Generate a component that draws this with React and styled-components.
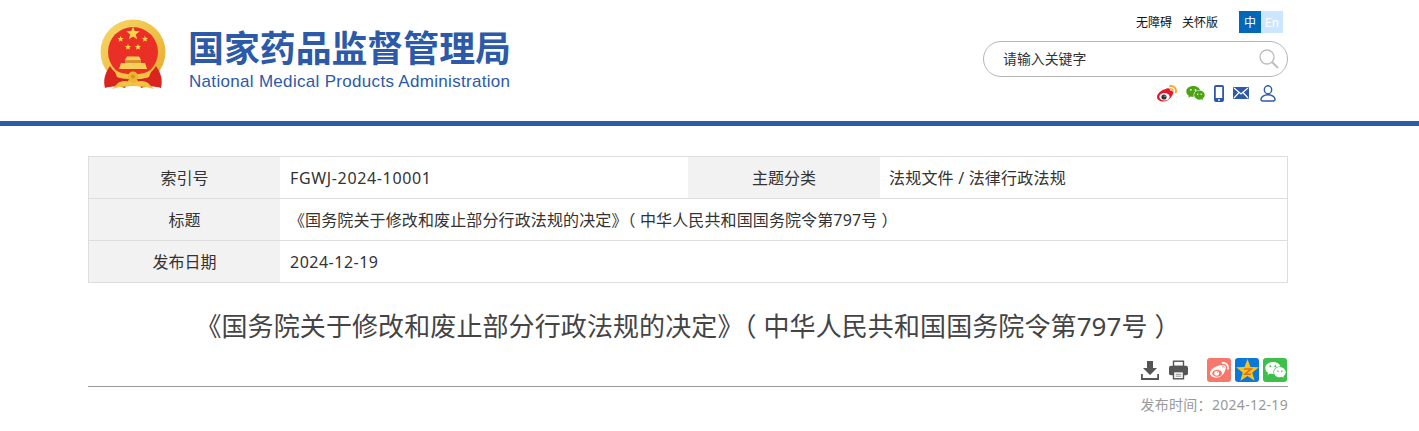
import React from "react";
import styled, { createGlobalStyle } from "styled-components";

const Global = createGlobalStyle`
  html, body { margin: 0; padding: 0; background: #fff; }
  body { font-family: "Noto Sans", "Noto Sans CJK SC", sans-serif; color: #333; overflow: hidden; }
`;
const Page = styled.div`width: 1419px; height: 431px; overflow: hidden;`;
const Header = styled.header`height: 121px; border-bottom: 5px solid #2c5aa8;`;
const Wrap = styled.div`width: 1200px; margin-left: 88px;`;
const HeaderInner = styled(Wrap)`display: flex; justify-content: space-between; height: 121px;`;
const Brand = styled.div`display: flex; align-items: flex-start; padding: 19px 0 0 11px;`;
const BrandText = styled.div`margin-left: 22px; padding-top: 6px; display: flex; flex-direction: column;`;
const CnName = styled.div`
  font-family: "Noto Sans CJK SC", sans-serif; font-weight: 700; font-size: 35.9px; line-height: 42px;
  color: #2c5aa8; white-space: nowrap; margin-left: -1px;
`;
const EnName = styled.div`
  font-family: "Liberation Sans", sans-serif; font-size: 17px; line-height: 20px; margin-top: 5px;
  letter-spacing: .31px; color: #2c5aa8; white-space: nowrap;
`;
const Tools = styled.div`width: 305px; display: flex; flex-direction: column; align-items: flex-end;`;
const TopLinks = styled.div`display: flex; align-items: center; padding: 11px 5px 0 0; height: 22px;`;
const TopLink = styled.span`
  font-family: "Noto Sans CJK SC", sans-serif; font-size: 12px; line-height: 22px; color: #111; margin-right: 10px;
  &:nth-child(2) { margin-right: 21px; }
`;
const Lang = styled.span`
  width: 22px; height: 22px; line-height: 22px; text-align: center; font-size: 12px;
  font-family: "Noto Sans CJK SC", sans-serif; color: #fff;
  background: ${p => (p.$on ? "#0068b7" : "#cce6ff")};
`;
const Search = styled.div`
  box-sizing: border-box; width: 305px; height: 36px; margin-top: 8px; border: 1px solid #b5b5b5; border-radius: 18px;
  display: flex; align-items: center; justify-content: space-between; padding: 0 8px 0 19px;
  font-family: "Noto Sans CJK SC", sans-serif; font-size: 14px; line-height: 32px; color: #333;
`;
const SearchHint = styled.span`position: relative; top: -1px; font-size: 13.9px;`;
const IconRow = styled.div`display: flex; align-items: center; height: 20px; margin-top: 6px; padding-right: 12px; gap: 9px;`;
const UserSlot = styled.span`display: flex; margin-left: 2px;`;
const Main = styled(Wrap)`padding-top: 30px;`;
const Table = styled.div`
  display: grid; grid-template-columns: 191px 408px 192px 1fr; border: 1px solid #ddd; border-bottom: 0;
  font-size: 16px; color: #333;
`;
const Label = styled.div`
  background: #f2f2f2; height: 41px; line-height: 41px; text-align: center; border-bottom: 1px solid #ddd;
  font-family: "Noto Sans CJK SC", sans-serif; font-size: 16px;
`;
const Value = styled.div`
  grid-column: ${p => (p.$wide ? "2 / -1" : "auto")};
  height: 41px; line-height: 43px; padding-left: ${p => p.$pad ?? 9}px; border-bottom: 1px solid #ddd; white-space: nowrap;
  letter-spacing: ${p => p.$track ?? 0}px;
  font-family: "Noto Sans", "Noto Sans CJK SC", sans-serif; font-size: 16px;
`;
const Title = styled.h1`
  margin: 24px 0 0; font-weight: 400; font-size: 26px; line-height: 38px; text-align: center; color: #444;
  letter-spacing: .1px; font-family: "Noto Sans", "Noto Sans CJK SC", sans-serif; white-space: nowrap;
`;
const ActionRow = styled.div`
  display: flex; justify-content: flex-end; align-items: center; height: 32px; margin-top: 6px; padding-top: 3px;
  border-bottom: 1px solid #999;
`;
const ActionGroup = styled.div`display: flex; align-items: center; gap: ${p => p.$gap}px; margin-right: ${p => p.$mr}px;`;
const Share = styled.span`
  width: 24px; height: 24px; border-radius: 3px; background: ${p => p.$bg}; display: flex; align-items: center; justify-content: center;
`;
const Meta = styled.div`
  margin-top: 8px; text-align: right; font-size: 14px; line-height: 20px; color: #999; letter-spacing: .3px;
  font-family: "Noto Sans", "Noto Sans CJK SC", sans-serif;
`;

const Star = ({ x, y, r, fill = "#f9d64a" }) => {
  const pts = [];
  for (let i = 0; i < 10; i++) {
    const a = (Math.PI / 5) * i - Math.PI / 2;
    const d = i % 2 ? r * 0.42 : r;
    pts.push(`${(x + d * Math.cos(a)).toFixed(2)},${(y + d * Math.sin(a)).toFixed(2)}`);
  }
  return <polygon points={pts.join(" ")} fill={fill} />;
};

const Emblem = () => (
  <svg width="68" height="70" viewBox="0 0 68 70">
    <defs>
      <linearGradient id="ring" x1="0" y1="0" x2="1" y2="1">
        <stop offset="0" stopColor="#f7d86b" />
        <stop offset="1" stopColor="#e7ab28" />
      </linearGradient>
    </defs>
    <circle cx="34" cy="33" r="32.5" fill="url(#ring)" />
    <circle cx="34" cy="33" r="25" fill="#ea3026" />
    <Star x={34} y={14.5} r={7} />
    <Star x={21.6} y={20} r={3.3} />
    <Star x={46} y={20} r={3.3} />
    <Star x={29} y={28} r={3.3} />
    <Star x={39} y={28} r={3.3} />
    <path d="M28 37.500 H40 L42 41 H26Z" fill="#f6cf58" />
    <rect x="26" y="41" width="16" height="3" fill="#d9912b" />
    <path d="M22 44 H46 L48 50 H20Z" fill="#f6cf58" />
    <path d="M11 47 C6 54 4 61 6 69 C12 67 20 67 26 69 L30 60 C22 58 15 54 11 47Z" fill="#d9241f" />
    <path d="M57 47 C62 54 64 61 62 69 C56 67 48 67 42 69 L38 60 C46 58 53 54 57 47Z" fill="#d9241f" />
    <path d="M15 50 C22 57 46 57 53 50 L50 58 C44 61 24 61 18 58Z" fill="#f2c242" />
    <circle cx="34" cy="57.500" r="5" fill="#ecb630" />
    <circle cx="34" cy="57.500" r="2" fill="#d9912b" />
    <path d="M13 70 L19 64 C24 61 30 62 34 64 C38 62 44 61 49 64 L55 70 L47 68 L34 67 L21 68Z" fill="#f2c242" />
  </svg>
);

const WeiboIcon = ({ face = "#e6162d", eye = "#333", wave = "#f5a623", width = 20 }) => (
  <svg width={width} height={width * 0.85} viewBox="0 0 20 17">
    <path d="M8 4.300C10.800 2.600 13.400 3 13 5.700c2.200-.5 3.900.6 3 2.900-1 3.700-4.900 7.900-9.300 7.900C3.100 16.500 0 14.700 0 11.900 0 9.400 3.400 5.400 8 4.300z" fill={face} />
    <ellipse cx="7.500" cy="11.800" rx="5.200" ry="3.700" fill={face === "#fff" ? eye : "#fff"} />
    <circle cx="7" cy="12" r="2.600" fill={face === "#fff" ? "#fff" : eye} />
    <circle cx="7.900" cy="11.100" r=".6" fill={face === "#fff" ? eye : "#fff"} />
    <path d="M13.200 1c3.400-.6 6.500 2.400 5.700 6.300" fill="none" stroke={wave} strokeWidth="1.800" strokeLinecap="round" />
    <path d="M13.500 3.900c1.700-.3 2.900 1 2.600 2.700" fill="none" stroke={wave} strokeWidth="1.300" strokeLinecap="round" />
  </svg>
);
const WechatIcon = ({ c = "#4ba414", hole = "#fff", width = 19 }) => (
  <svg width={width} height={width * 0.85} viewBox="0 0 20 17">
    <path d="M7.500 1C3.500 1 .3 3.500.3 6.800c0 1.900 1.100 3.400 2.700 4.500L2.300 13.300l2.500-1.300c.9.200 1.700.4 2.700.4.300 0 .6 0 .8 0-.2-.6-.3-1.100-.3-1.800 0-3 2.700-5.300 6.200-5.300h.6C14.100 2.900 11.100 1 7.500 1z" fill={c} />
    <path d="M19.700 10.600c0-2.700-2.700-4.900-5.600-4.900-3.100 0-5.500 2.200-5.500 4.900s2.400 4.900 5.500 4.900c.6 0 1.300-.2 2-.4l1.800 1-.5-1.700c1.400-1 2.300-2.300 2.300-3.800z" fill={c} />
    <circle cx="5.100" cy="5.100" r=".95" fill={hole} /><circle cx="9.900" cy="5.100" r=".95" fill={hole} />
    <circle cx="12.300" cy="9.700" r=".75" fill={hole} /><circle cx="16" cy="9.700" r=".75" fill={hole} />
  </svg>
);
const PhoneIcon = () => (
  <svg width="10" height="17" viewBox="0 0 10 17">
    <rect width="10" height="17" rx="2" fill="#2c5aa8" />
    <rect x="1.800" y="2" width="6.400" height="11" fill="#fff" />
    <circle cx="5" cy="15" r=".9" fill="#fff" />
  </svg>
);
const MailIcon = () => (
  <svg width="16" height="12" viewBox="0 0 16 12">
    <rect width="16" height="12" rx="1" fill="#2c5aa8" />
    <path d="M1 1 L8 7 L15 1 M1 11 L6 5.500 M15 11 L10 5.500" fill="none" stroke="#fff" strokeWidth="1.200" />
  </svg>
);
const UserIcon = () => (
  <svg width="16" height="17" viewBox="0 0 17 18" fill="none" stroke="#2c5aa8" strokeWidth="1.500">
    <ellipse cx="8.500" cy="5" rx="3.900" ry="4.300" />
    <path d="M1 15.500c0-3 3.500-5.200 7.500-5.200s7.500 2.200 7.500 5.200c0 1-.7 1.500-1.500 1.500h-12C1.700 17 1 16.500 1 15.500z" />
  </svg>
);
const SearchIcon = () => (
  <svg width="20" height="20" viewBox="0 0 20 20" fill="none" stroke="#bdbdbd">
    <circle cx="8" cy="8" r="7" strokeWidth="1.300" />
    <path d="M13 13 L19 19" strokeWidth="1.800" />
  </svg>
);
const DownloadIcon = () => (
  <svg width="18" height="19" viewBox="0 0 18 19" fill="#555">
    <path d="M6 0h6v7h4L9 14 2 7h4z" />
    <path d="M0 13h1.800v4h14.400v-4H18v6H0z" />
  </svg>
);
const PrintIcon = () => (
  <svg width="19" height="20" viewBox="0 0 20 20">
    <path d="M4 0h12v6H4z" fill="#555" />
    <rect x="5.500" y="1.500" width="9" height="4" fill="#fff" />
    <rect x="0" y="5.500" width="20" height="10" rx="2" fill="#555" />
    <path d="M4 11h12v9H4z" fill="#555" />
    <rect x="5.500" y="12.500" width="9" height="6" fill="#fff" />
    <path d="M7 14.500h6M7 16.500h6" stroke="#888" />
  </svg>
);
const QzoneIcon = () => (
  <svg width="23" height="23" viewBox="0 0 22 22">
    <Star x={11} y={11.500} r={11.500} fill="#f8c41a" />
    <path d="M7.500 9.500h7L8.500 14.500h6" fill="none" stroke="#e0701a" strokeWidth="1.500" />
  </svg>
);

export default function App() {
  return (
    <Page>
      <Global />
      <Header>
        <HeaderInner>
          <Brand>
            <Emblem />
            <BrandText>
              <CnName>国家药品监督管理局</CnName>
              <EnName>National Medical Products Administration</EnName>
            </BrandText>
          </Brand>
          <Tools>
            <TopLinks>
              <TopLink>无障碍</TopLink>
              <TopLink>关怀版</TopLink>
              <Lang $on>中</Lang>
              <Lang>En</Lang>
            </TopLinks>
            <Search><SearchHint>请输入关键字</SearchHint><SearchIcon /></Search>
            <IconRow>
              <WeiboIcon />
              <WechatIcon />
              <PhoneIcon />
              <MailIcon />
              <UserSlot><UserIcon /></UserSlot>
            </IconRow>
          </Tools>
        </HeaderInner>
      </Header>
      <Main>
        <Table>
          <Label>索引号</Label>
          <Value $track={.65} $pad={10}>FGWJ-2024-10001</Value>
          <Label>主题分类</Label>
          <Value $track={.2}>法规文件 / 法律行政法规</Value>
          <Label>标题</Label>
          <Value $wide $track={.12}>《国务院关于修改和废止部分行政法规的决定》（ 中华人民共和国国务院令第797号 ）</Value>
          <Label>发布日期</Label>
          <Value $wide $track={.5} $pad={10}>2024-12-19</Value>
        </Table>
        <Title>《国务院关于修改和废止部分行政法规的决定》（ 中华人民共和国国务院令第797号 ）</Title>
        <ActionRow>
          <ActionGroup $gap={10} $mr={19}><DownloadIcon /><PrintIcon /></ActionGroup>
          <ActionGroup $gap={4} $mr={1}>
            <Share $bg="#f6786a"><WeiboIcon face="#fff" eye="#f6786a" wave="#fff" width={19} /></Share>
            <Share $bg="#0a78d8"><QzoneIcon /></Share>
            <Share $bg="#3cc04a"><WechatIcon c="#fff" hole="#3cc04a" width={21} /></Share>
          </ActionGroup>
        </ActionRow>
        <Meta>发布时间：2024-12-19</Meta>
      </Main>
    </Page>
  );
}
